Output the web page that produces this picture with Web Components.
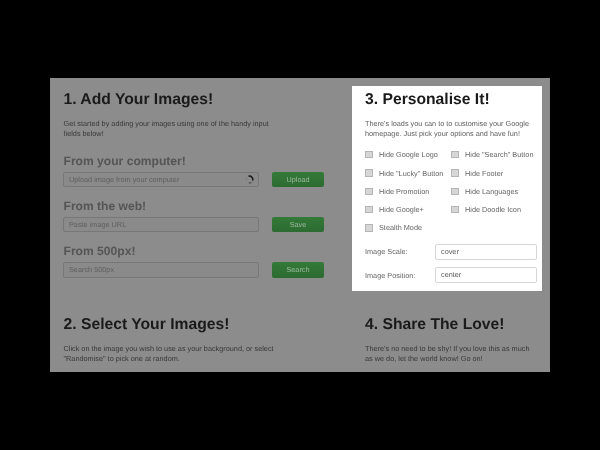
<!DOCTYPE html>
<html>
<head>
<meta charset="utf-8">
<title>Personalise</title>
<style>
  html, body { margin: 0; height: 100%; background: #000; }
  body {
    font-family: "Liberation Sans", Arial, sans-serif;
    text-rendering: geometricPrecision;
    padding: 78px 50px 0;
    box-sizing: border-box;
  }
</style>
</head>
<body>
<step-board>
  <step-section slot="left" heading="1. Add Your Images!" text="Get started by adding your images using one of the handy input fields below!">
    <source-field label="From your computer!" hint="Upload image from your computer" action="Upload" busy></source-field>
    <source-field label="From the web!" hint="Paste image URL" action="Save"></source-field>
    <source-field label="From 500px!" hint="Search 500px" action="Search"></source-field>
  </step-section>
  <options-panel slot="right">
    <step-section heading="3. Personalise It!" text="There's loads you can to to customise your Google homepage. Just pick your options and have fun!">
      <check-grid>
        <check-option>Hide Google Logo</check-option>
        <check-option>Hide "Search" Button</check-option>
        <check-option>Hide "Lucky" Button</check-option>
        <check-option>Hide Footer</check-option>
        <check-option>Hide Promotion</check-option>
        <check-option>Hide Languages</check-option>
        <check-option>Hide Google+</check-option>
        <check-option>Hide Doodle Icon</check-option>
        <check-option>Stealth Mode</check-option>
      </check-grid>
      <value-field label="Image Scale:" value="cover"></value-field>
      <value-field label="Image Position:" value="center"></value-field>
    </step-section>
  </options-panel>
  <step-section slot="left2" heading="2. Select Your Images!" text="Click on the image you wish to use as your background, or select &quot;Randomise&quot; to pick one at random."></step-section>
  <step-section slot="right2" heading="4. Share The Love!" text="There's no need to be shy! If you love this as much as we do, let the world know! Go on!"></step-section>
</step-board>

<script>
class StepBoard extends HTMLElement {
  constructor() {
    super();
    this.attachShadow({ mode: 'open' }).innerHTML = `
      <style>
        :host {
          display: grid;
          grid-template-columns: 302px 190px;
          grid-template-rows: 205px 1fr;
          width: 500px;
          height: 294px;
          padding-top: 8px;
          box-sizing: border-box;
          background: #8c8c8c;
          overflow: hidden;
          filter: blur(0.25px);
        }
        .l { padding: 3.5px 0 0 13.5px; }
        .l2 { padding: 23.5px 0 0 13.5px; }
        .r2 { padding: 23.5px 0 0 13px; --text-width: 170px; }
      </style>
      <div class="l"><slot name="left"></slot></div>
      <slot name="right"></slot>
      <div class="l2"><slot name="left2"></slot></div>
      <div class="r2"><slot name="right2"></slot></div>`;
  }
}

class StepSection extends HTMLElement {
  constructor() {
    super();
    this.attachShadow({ mode: 'open' }).innerHTML = `
      <style>
        :host { display: block; }
        h2 {
          margin: 0;
          font-size: 15.7px;
          line-height: 20px;
          font-weight: bold;
          color: #1a1a1a;
          white-space: nowrap;
        }
        p {
          margin: 9.5px 0 0;
          width: var(--text-width, 212px);
          font-size: 7.3px;
          line-height: 10.3px;
          color: var(--text-colour, #383838);
        }
      </style>
      <h2></h2>
      <p></p>
      <slot></slot>`;
    this.shadowRoot.querySelector('h2').textContent = this.getAttribute('heading');
    this.shadowRoot.querySelector('p').textContent = this.getAttribute('text');
  }
}

class SourceField extends HTMLElement {
  constructor() {
    super();
    this.attachShadow({ mode: 'open' }).innerHTML = `
      <style>
        :host { display: block; margin-top: 11.75px; }
        :host(:first-of-type) { margin-top: 14px; }
        h3 {
          margin: 0 0 4px;
          font-size: 12.1px;
          line-height: 14px;
          font-weight: bold;
          color: #555;
        }
        .row { display: flex; align-items: center; gap: 13px; margin-left: -0.5px; }
        .box {
          flex: none;
          width: 196px;
          height: 15.5px;
          box-sizing: border-box;
          display: flex;
          align-items: center;
          justify-content: space-between;
          padding: 0 5px;
          border: 1px solid #777;
          border-radius: 2px;
          background: #8a8a8a;
          font-size: 7.3px;
          color: #5e5e5e;
        }
        svg { display: block; margin-right: -1px; }
        .btn {
          flex: none;
          width: 52px;
          height: 15.5px;
          display: flex;
          align-items: center;
          justify-content: center;
          border-radius: 2px;
          background: linear-gradient(#347a38, #2c6b31);
          font-size: 7.3px;
          color: #9db89f;
        }
      </style>
      <h3></h3>
      <div class="row">
        <div class="box"><span class="hint"></span></div>
        <div class="btn"></div>
      </div>`;
    const root = this.shadowRoot;
    root.querySelector('h3').textContent = this.getAttribute('label');
    root.querySelector('.hint').textContent = this.getAttribute('hint');
    root.querySelector('.btn').textContent = this.getAttribute('action');
    if (this.hasAttribute('busy')) {
      root.querySelector('.box').insertAdjacentHTML('beforeend', `
        <svg width="9" height="9" viewBox="0 0 9 9" fill="none" stroke-width="1.5">
          <path d="M3.5 1.2 A3.4 3.4 0 0 1 7.6 5.6" stroke="#161616"/>
          <path d="M6.4 7.4 A3.4 3.4 0 0 1 3.8 7.8" stroke="#5a5a5a"/>
          <path d="M1.6 3.6 L1.2 4.2" stroke="#5a5a5a"/>
        </svg>`);
    }
  }
}

class OptionsPanel extends HTMLElement {
  constructor() {
    super();
    this.attachShadow({ mode: 'open' }).innerHTML = `
      <style>
        :host {
          display: block;
          background: #fff;
          padding: 3.5px 5px 0 13px;
          box-sizing: border-box;
          height: 205px;
          --text-width: 170px;
          --text-colour: #5e5e5e;
        }
      </style>
      <slot></slot>`;
  }
}

class CheckGrid extends HTMLElement {
  constructor() {
    super();
    this.attachShadow({ mode: 'open' }).innerHTML = `
      <style>
        :host {
          display: grid;
          grid-template-columns: 86px 1fr;
          grid-auto-rows: 18.3px;
          margin: 6px 0 7px;
        }
      </style>
      <slot></slot>`;
  }
}

class CheckOption extends HTMLElement {
  constructor() {
    super();
    this.attachShadow({ mode: 'open' }).innerHTML = `
      <style>
        :host {
          display: flex;
          align-items: center;
          gap: 6.5px;
          font-size: 7.3px;
          color: #666;
          white-space: nowrap;
        }
        i {
          flex: none;
          width: 7.5px;
          height: 7.5px;
          box-sizing: border-box;
          border: 1px solid #b5b5b5;
          background: #d6d6d6;
        }
      </style>
      <i></i><slot></slot>`;
  }
}

class ValueField extends HTMLElement {
  constructor() {
    super();
    this.attachShadow({ mode: 'open' }).innerHTML = `
      <style>
        :host {
          display: flex;
          align-items: center;
          height: 15.5px;
          margin-bottom: 7.8px;
          font-size: 7.3px;
          color: #666;
        }
        .name { flex: none; width: 70px; }
        .box {
          flex: none;
          width: 102px;
          height: 15.5px;
          box-sizing: border-box;
          padding: 0 5px;
          line-height: 13.5px;
          border: 1px solid #d6d6d6;
          border-radius: 2px;
          color: #5e5e5e;
        }
      </style>
      <span class="name"></span>
      <div class="box"></div>`;
    this.shadowRoot.querySelector('.name').textContent = this.getAttribute('label');
    this.shadowRoot.querySelector('.box').textContent = this.getAttribute('value');
  }
}

customElements.define('step-board', StepBoard);
customElements.define('step-section', StepSection);
customElements.define('source-field', SourceField);
customElements.define('options-panel', OptionsPanel);
customElements.define('check-grid', CheckGrid);
customElements.define('check-option', CheckOption);
customElements.define('value-field', ValueField);
</script>
</body>
</html>
